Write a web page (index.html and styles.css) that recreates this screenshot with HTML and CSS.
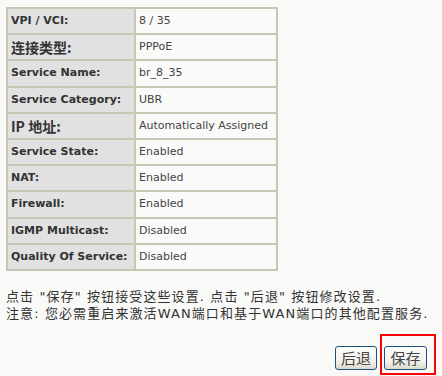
FILE: index.html
```html
<!DOCTYPE html>
<html lang="zh-CN">

<head>
    <meta charset="UTF-8">
    <title>WAN 设置确认</title>
    <link rel="stylesheet" href="styles.css">
</head>

<body>
    <table class="summary">
        <colgroup>
            <col class="col-label">
            <col class="col-value">
        </colgroup>
        <tr><th>VPI / VCI:</th><td>8 / 35</td></tr>
        <tr><th class="cjk">连接类型:</th><td>PPPoE</td></tr>
        <tr><th>Service Name:</th><td>br_8_35</td></tr>
        <tr><th>Service Category:</th><td>UBR</td></tr>
        <tr><th class="cjk">IP 地址:</th><td>Automatically Assigned</td></tr>
        <tr><th>Service State:</th><td>Enabled</td></tr>
        <tr><th>NAT:</th><td>Enabled</td></tr>
        <tr><th>Firewall:</th><td>Enabled</td></tr>
        <tr><th>IGMP Multicast:</th><td>Disabled</td></tr>
        <tr><th>Quality Of Service:</th><td>Disabled</td></tr>
    </table>

    <div class="note">
        <div class="line">点击 "保存" 按钮接受这些设置. 点击 "后退" 按钮修改设置.</div>
        <div class="line">注意: 您必需重启来激活WAN端口和基于WAN端口的其他配置服务.</div>
    </div>

    <div class="actions">
        <button class="btn back">后退</button>
        <span class="highlight"><button class="btn">保存</button></span>
    </div>
</body>

</html>
```

FILE: styles.css
```css
body {
    margin: 0;
    padding: 7px 6px 0 6px;
    background-color: #f9f9f7;
    color: #3a3a3a;
    font-family: "DejaVu Sans", "Noto Sans CJK SC", sans-serif;
    font-size: 11px;
}

.summary {
    border-collapse: collapse;
    table-layout: fixed;
    width: 272px;
    border: 1px solid #aca899;
}

.col-label {
    width: 128px;
}

.summary th,
.summary td {
    height: 24.2px;
    padding: 0 3px;
    border: 2px solid #c9c6b4;
    text-align: left;
    white-space: nowrap;
    line-height: 14px;
}

.summary th {
    background-color: #e1e1e1;
    font-weight: bold;
    color: #333;
}

.summary th.cjk {
    font-family: "Noto Sans CJK SC", sans-serif;
    font-size: 14px;
    line-height: 16px;
}

.summary td {
    background-color: #fafaf8;
    color: #444;
}

.note {
    margin-top: 17px;
    font-family: "DejaVu Sans", "Noto Sans CJK SC", sans-serif;
    font-size: 13px;
    letter-spacing: 1.1px;
    color: #333;
}

.note .line {
    height: 17px;
    line-height: 17px;
    white-space: nowrap;
}

.actions {
    display: flex;
    justify-content: flex-end;
    align-items: flex-end;
    margin-top: 12px;
}

.btn {
    width: 43px;
    height: 24px;
    padding: 0;
    border: 1px solid #1c5180;
    border-radius: 3px;
    background: linear-gradient(#ffffff, #f0efe8 70%, #dcd9cc);
    color: #444;
    font-family: "Noto Sans CJK SC", sans-serif;
    font-size: 15px;
    line-height: 20px;
}

.btn.back {
    width: 42px;
    margin: 0 3px 5px 0;
}

.highlight {
    display: flex;
    border: 2px solid #f00;
    padding: 10px 7px 3px 2px;
}
```
